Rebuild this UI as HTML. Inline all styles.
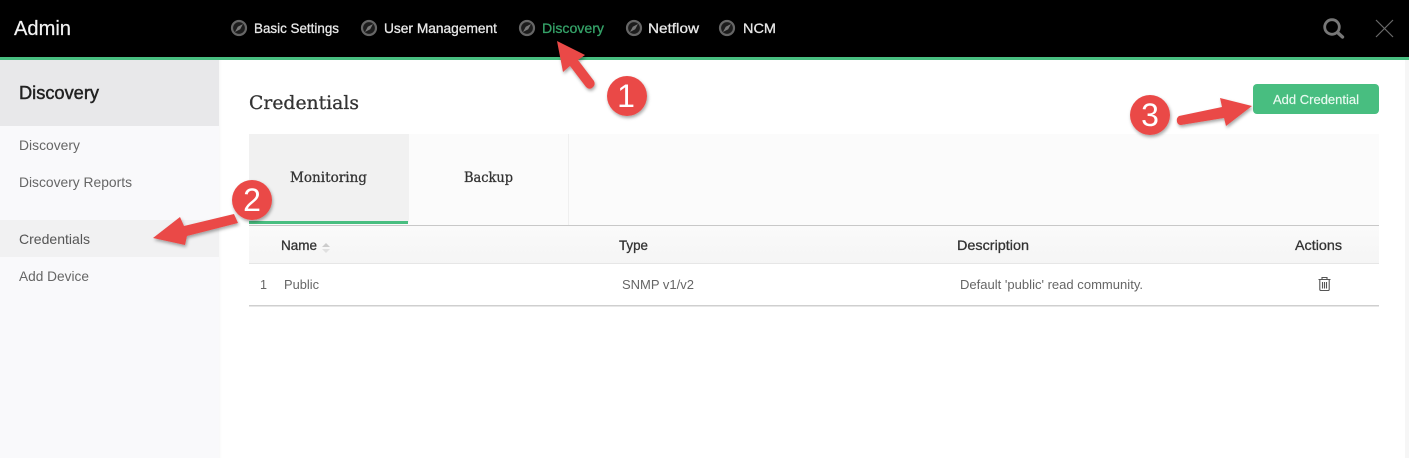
<!DOCTYPE html>
<html lang="en"><head><meta charset="utf-8"><title>Credentials</title>
<style>
html,body{margin:0;padding:0;width:1409px;height:458px;overflow:hidden;background:#fff}
svg{display:block;filter:blur(.3px)}
text{font-family:"Liberation Sans",sans-serif;font-size:14px;fill:#5f5f5f}
.serif{font-family:"DejaVu Serif","Liberation Serif",serif}
.nav{fill:#e8e8e8;font-size:14px;stroke:#e8e8e8;stroke-width:.3}
.th{fill:#333;font-size:14px;stroke:#333;stroke-width:.3}
.td{fill:#666;font-size:13px}
.side{fill:#666;font-size:14px}
.num{font-size:32px;fill:#fff;text-anchor:middle}
</style></head><body>
<svg width="1409" height="458" viewBox="0 0 1409 458" xmlns="http://www.w3.org/2000/svg">
<defs>
<filter id="sh" x="-30%" y="-30%" width="170%" height="170%"><feDropShadow dx="1" dy="2" stdDeviation="1.5" flood-color="#000" flood-opacity=".35"/></filter>
<linearGradient id="sg" x1="0" x2="1"><stop offset="0" stop-color="#f8f8f8"/><stop offset="1" stop-color="#fff"/></linearGradient>
<linearGradient id="hg" x1="0" x2="0" y1="0" y2="1"><stop offset="0" stop-color="#fafafa"/><stop offset="1" stop-color="#f5f5f5"/></linearGradient>
<g id="cp"><circle r="7" fill="#1c1c1c" stroke="#666" stroke-width="2.2"/><path d="M4-4L-1.2-1.2-4 4 1.2 1.2Z" fill="#777"/></g>
</defs>

<!-- top bar -->
<rect width="1409" height="57" fill="#000"/>
<rect y="57" width="1409" height="3" fill="#48be80"/>
<text x="14" y="35" textLength="57" lengthAdjust="spacingAndGlyphs" style="font-size:20px;fill:#f2f2f2;stroke:#f2f2f2;stroke-width:.2">Admin</text>
<use href="#cp" x="239" y="28"/><text class="nav" x="254" y="33" textLength="85" lengthAdjust="spacingAndGlyphs">Basic Settings</text>
<use href="#cp" x="369" y="28"/><text class="nav" x="384" y="33" textLength="113" lengthAdjust="spacingAndGlyphs">User Management</text>
<use href="#cp" x="527" y="28"/><text class="nav" x="542" y="33" textLength="62" lengthAdjust="spacingAndGlyphs" style="fill:#35a268;stroke:#35a268">Discovery</text>
<use href="#cp" x="634" y="28"/><text class="nav" x="648" y="33" textLength="51" lengthAdjust="spacingAndGlyphs">Netflow</text>
<use href="#cp" x="727" y="28"/><text class="nav" x="743" y="33" textLength="33" lengthAdjust="spacingAndGlyphs">NCM</text>
<circle cx="1332" cy="27" r="7.3" fill="none" stroke="#777" stroke-width="2.8"/>
<path d="M1337.5 32.5L1342.5 37" stroke="#777" stroke-width="3.4" stroke-linecap="round"/>
<path d="M1376 20L1393 37M1393 20L1376 37" stroke="#6a6a6a" stroke-width="1.2"/>

<!-- sidebar -->
<rect y="60" width="219" height="398" fill="#f9f9fb"/>
<rect y="60" width="219" height="66" fill="#e8e8ea"/>
<rect x="219" y="60" width="3" height="398" fill="url(#sg)"/>
<text x="19" y="99" textLength="80" lengthAdjust="spacingAndGlyphs" style="font-size:18px;fill:#222;stroke:#222;stroke-width:.45">Discovery</text>
<text class="side" x="19" y="150" textLength="61" lengthAdjust="spacingAndGlyphs">Discovery</text>
<text class="side" x="19" y="187" textLength="113" lengthAdjust="spacingAndGlyphs">Discovery Reports</text>
<rect y="220" width="219" height="37" fill="#f1f1f2"/>
<text class="side" x="19" y="244" textLength="71" lengthAdjust="spacingAndGlyphs" style="fill:#555">Credentials</text>
<text class="side" x="19" y="281" textLength="70" lengthAdjust="spacingAndGlyphs">Add Device</text>

<!-- main -->
<text class="serif" x="249" y="109" textLength="110" lengthAdjust="spacingAndGlyphs" style="font-size:19px;fill:#333;stroke:#333;stroke-width:.3">Credentials</text>
<rect x="1253" y="84" width="126" height="30" rx="4" fill="#48be80"/>
<text x="1273" y="104" textLength="86" lengthAdjust="spacingAndGlyphs" style="font-size:13px;fill:#eafaf1;stroke:#eafaf1;stroke-width:.15">Add Credential</text>

<!-- tabs -->
<rect x="249" y="134" width="1130" height="91" fill="#fbfbfb"/>
<rect x="249" y="134" width="160" height="88" fill="#f1f1f1"/>
<rect x="568" y="134" width="1" height="91" fill="#efefef"/>
<rect x="249" y="225" width="1130" height="1" fill="#c8c8c8"/>
<rect x="249" y="221" width="159" height="3" fill="#48be80"/>
<text class="serif" x="290" y="182" textLength="77" lengthAdjust="spacingAndGlyphs" style="font-size:14px;fill:#333;stroke:#333;stroke-width:.3">Monitoring</text>
<text class="serif" x="464" y="182" textLength="49" lengthAdjust="spacingAndGlyphs" style="font-size:14px;fill:#333;stroke:#333;stroke-width:.3">Backup</text>

<!-- table -->
<rect x="249" y="226" width="1130" height="37" fill="url(#hg)"/>
<rect x="249" y="263" width="1130" height="1" fill="#e6e6e6"/>
<text class="th" x="281" y="250" textLength="36" lengthAdjust="spacingAndGlyphs">Name</text>
<path d="M322 247L326 243 330 247Z" fill="#ccc"/><path d="M322 249L326 253 330 249Z" fill="#e0e0e0"/>
<text class="th" x="619" y="250" textLength="29" lengthAdjust="spacingAndGlyphs">Type</text>
<text class="th" x="957" y="250" textLength="72" lengthAdjust="spacingAndGlyphs">Description</text>
<text class="th" x="1295" y="250" textLength="47" lengthAdjust="spacingAndGlyphs">Actions</text>
<text class="td" x="260" y="289" textLength="7" lengthAdjust="spacingAndGlyphs">1</text>
<text class="td" x="284" y="289" textLength="35" lengthAdjust="spacingAndGlyphs">Public</text>
<text class="td" x="622" y="289" textLength="72" lengthAdjust="spacingAndGlyphs">SNMP v1/v2</text>
<text class="td" x="960" y="289" textLength="183" lengthAdjust="spacingAndGlyphs">Default 'public' read community.</text>
<path d="M1318.5 279.5H1330.5M1322 279V277.5H1327V279M1319.8 280V289.5Q1319.8 290.5 1321 290.5H1328Q1329.2 290.5 1329.2 289.5V280M1322.5 282V288.5M1324.5 282V288.5M1326.5 282V288.5" fill="none" stroke="#555" stroke-width="1.1"/>
<rect x="249" y="305" width="1130" height="1.5" fill="#cfcfcf"/>
<rect x="1405" y="60" width="4" height="398" fill="#f6f6f6"/>

<!-- annotations -->
<g fill="#ea4a47" filter="url(#sh)">
<path d="M557 41L585 55 578 60 594 81Q596 85 592 88 589 90 586 87L570 66 563 72Z"/>
<circle cx="627" cy="96" r="20"/>
<path d="M153 238L180 217 184 226 234 214 238 223 187 236 185 245Z"/>
<circle cx="252" cy="200" r="20"/>
<path d="M1252 106L1220 98 1222 107 1179 116Q1176 118 1177 122 1178 125 1181 125L1224 118 1226 126Z"/>
<circle cx="1150" cy="115" r="20"/>
</g>
<text class="num" x="626" y="107">1</text>
<text class="num" x="252" y="211">2</text>
<text class="num" x="1150" y="126">3</text>
</svg>
</body></html>
